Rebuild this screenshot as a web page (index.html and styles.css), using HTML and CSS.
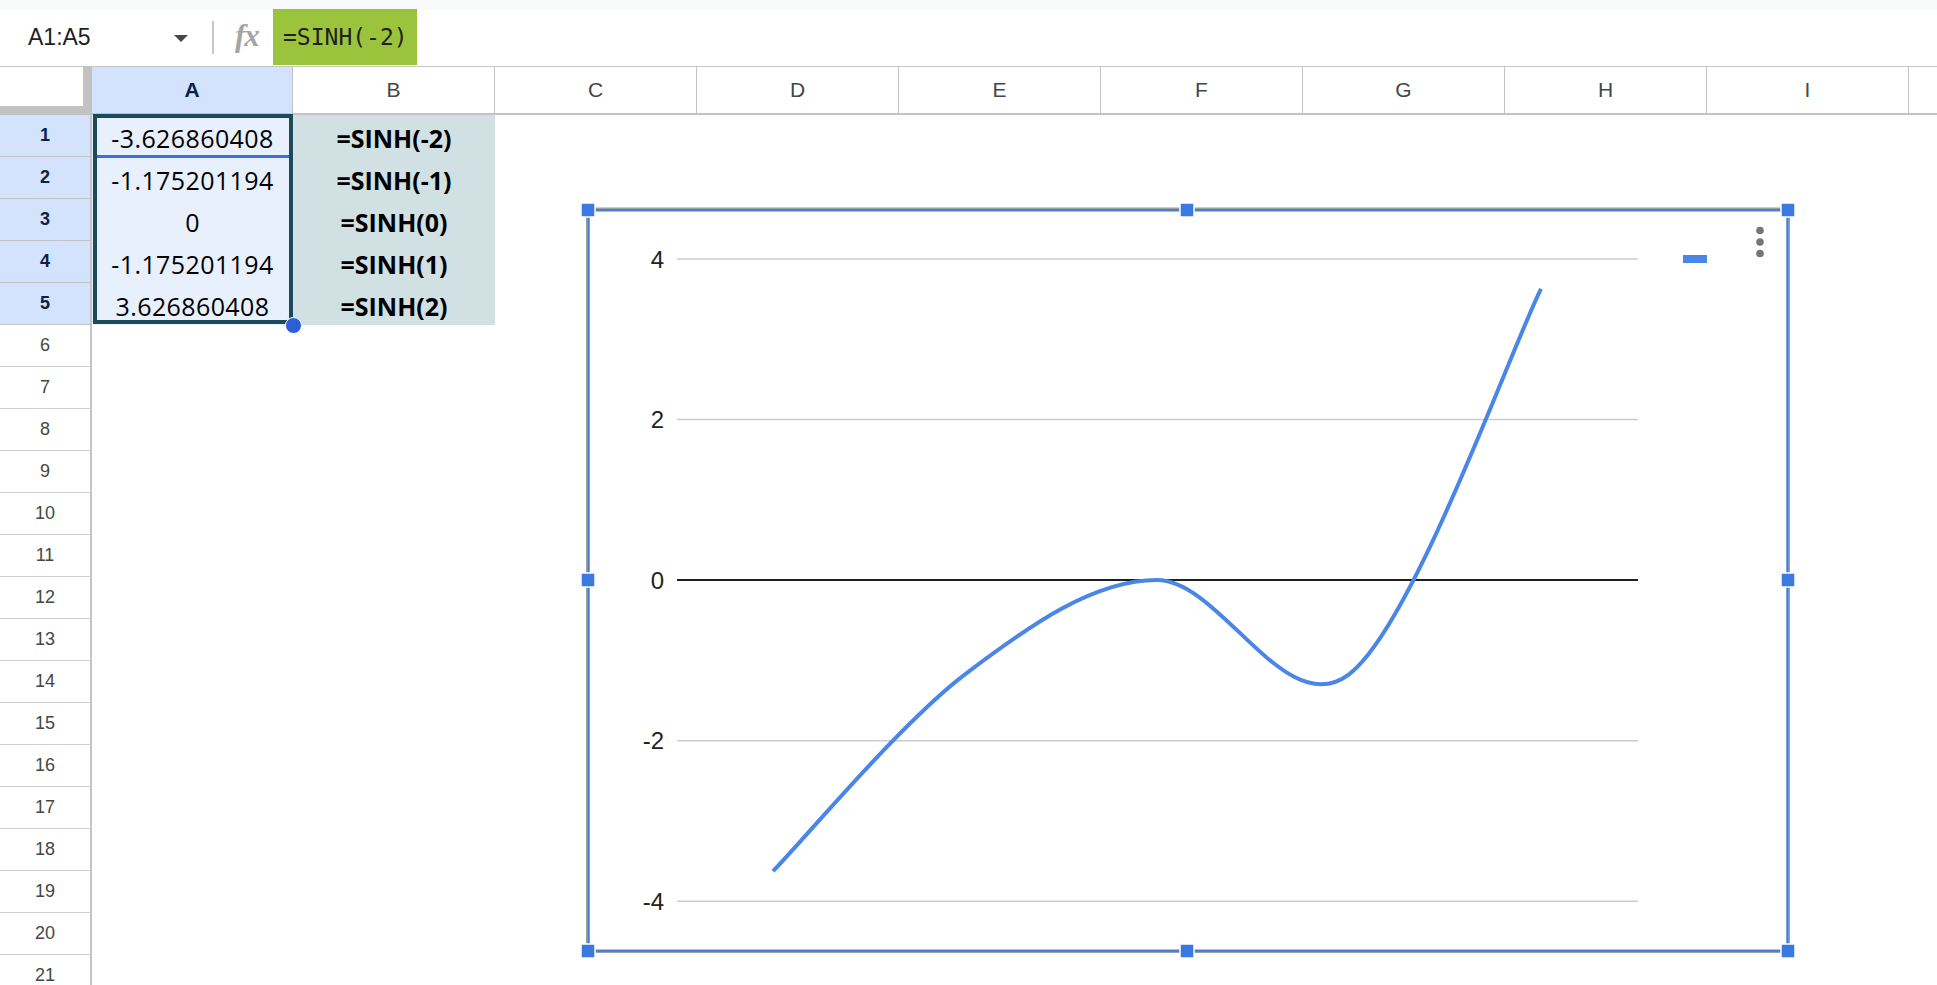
FILE: index.html
```html
<!DOCTYPE html>
<html>
<head>
<meta charset="utf-8">
<link rel="stylesheet" href="styles.css">
</head>
<body>
<div class="topstrip"></div>
<div class="fbar">
  <div class="namebox"><span class="nametext">A1:A5</span><span class="arrow"></span></div>
  <div class="sep"></div>
  <div class="fx">fx</div>
  <div class="formula">=SINH(-2)</div>
</div>
<div class="sheet">
  <div class="hrow">
    <div class="corner"></div>
    <div class="ch a">A</div>
    <div class="ch">B</div>
    <div class="ch">C</div>
    <div class="ch">D</div>
    <div class="ch">E</div>
    <div class="ch">F</div>
    <div class="ch">G</div>
    <div class="ch">H</div>
    <div class="ch">I</div>
    <div class="ch last"></div>
  </div>
  <div class="row"><div class="rh sel">1</div><div class="cell ca sel">-3.626860408</div><div class="cell cb fill">=SINH(-2)</div></div>
  <div class="row"><div class="rh sel">2</div><div class="cell ca sel">-1.175201194</div><div class="cell cb fill">=SINH(-1)</div></div>
  <div class="row"><div class="rh sel">3</div><div class="cell ca sel">0</div><div class="cell cb fill">=SINH(0)</div></div>
  <div class="row"><div class="rh sel">4</div><div class="cell ca sel">-1.175201194</div><div class="cell cb fill">=SINH(1)</div></div>
  <div class="row"><div class="rh sel">5</div><div class="cell ca sel">3.626860408</div><div class="cell cb fill">=SINH(2)</div></div>
  <div class="row"><div class="rh">6</div></div>
  <div class="row"><div class="rh">7</div></div>
  <div class="row"><div class="rh">8</div></div>
  <div class="row"><div class="rh">9</div></div>
  <div class="row"><div class="rh">10</div></div>
  <div class="row"><div class="rh">11</div></div>
  <div class="row"><div class="rh">12</div></div>
  <div class="row"><div class="rh">13</div></div>
  <div class="row"><div class="rh">14</div></div>
  <div class="row"><div class="rh">15</div></div>
  <div class="row"><div class="rh">16</div></div>
  <div class="row"><div class="rh">17</div></div>
  <div class="row"><div class="rh">18</div></div>
  <div class="row"><div class="rh">19</div></div>
  <div class="row"><div class="rh">20</div></div>
  <div class="row"><div class="rh">21</div></div>
</div>

<div class="selbox"><div class="activeline"></div></div>
<div class="fillhandle"></div>

<div class="chart">
  <svg class="chartsvg" width="1224" height="765" viewBox="576 198 1224 765">
    <rect x="586" y="208" width="1204" height="745" fill="#ffffff"/>
    <g class="grid">
      <line x1="677" y1="259" x2="1638" y2="259"/>
      <line x1="677" y1="419.6" x2="1638" y2="419.6"/>
      <line x1="677" y1="740.7" x2="1638" y2="740.7"/>
      <line x1="677" y1="901.3" x2="1638" y2="901.3"/>
    </g>
    <line class="zero" x1="677" y1="580" x2="1638" y2="580"/>
    <g class="labels">
      <text x="664" y="267.5">4</text>
      <text x="664" y="428">2</text>
      <text x="664" y="588.5">0</text>
      <text x="664" y="749">-2</text>
      <text x="664" y="910">-4</text>
    </g>
    <path class="series" d="M773 871.2 C805 838.4 901 722.8 965 674.3 C1029 625.8 1093 580 1157 580 C1221 580 1285 722.8 1349 674.3 C1413 625.8 1509 353.05 1541 288.8"/>
    <rect x="1683" y="255" width="24" height="8" fill="#4a85e8"/>
    <g fill="#757575">
      <circle cx="1760" cy="230.5" r="3.8"/>
      <circle cx="1760" cy="242" r="3.8"/>
      <circle cx="1760" cy="253.5" r="3.8"/>
    </g>
    <rect class="frame-gray" x="586.75" y="208.25" width="1202.5" height="744" />
    <rect class="frame-blue" x="588.5" y="210.25" width="1199" height="740.5" />
    <g class="handles">
      <rect x="581" y="203" width="14" height="14"/>
      <rect x="1180" y="203" width="14" height="14"/>
      <rect x="1781" y="203" width="14" height="14"/>
      <rect x="581" y="573" width="14" height="14"/>
      <rect x="1781" y="573" width="14" height="14"/>
      <rect x="581" y="944" width="14" height="14"/>
      <rect x="1180" y="944" width="14" height="14"/>
      <rect x="1781" y="944" width="14" height="14"/>
    </g>
  </svg>
</div>
</body>
</html>
```

FILE: styles.css
```css
* { box-sizing: border-box; }

body {
  margin: 0;
  width: 1937px;
  height: 985px;
  overflow: hidden;
  background: #ffffff;
  font-family: "Liberation Sans", Arial, sans-serif;
  position: relative;
}

.topstrip {
  height: 9px;
  background: #f8f9fa;
}

.fbar {
  height: 57px;
  display: flex;
  align-items: center;
  background: #ffffff;
}

.namebox {
  width: 212px;
  height: 100%;
  display: flex;
  align-items: center;
  justify-content: space-between;
  padding: 0 24px 0 28px;
}

.nametext {
  font-size: 23px;
  color: #202124;
}

.arrow {
  width: 0;
  height: 0;
  border-left: 7px solid transparent;
  border-right: 7px solid transparent;
  border-top: 7px solid #444746;
  margin-top: 2px;
}

.sep {
  width: 2px;
  height: 33px;
  background: #c7c7c7;
}

.fx {
  margin-left: 21px;
  width: 31px;
  margin-right: 7px;
  font-family: "Liberation Serif", serif;
  font-style: italic;
  font-weight: bold;
  font-size: 31px;
  color: #a4a4a4;
  letter-spacing: -1px;
  line-height: 1;
  margin-top: -4px;
}

.formula {
  align-self: flex-start;
  height: 56px;
  width: 144px;
  background: #9bc43c;
  padding-left: 10px;
  display: flex;
  align-items: center;
  font-family: "DejaVu Sans Mono", "Liberation Mono", monospace;
  font-size: 23px;
  color: #1f1f1f;
}

.sheet {
  border-top: 1px solid #c4c7c5;
}

.hrow {
  display: flex;
  height: 48px;
}

.corner {
  width: 92px;
  height: 48px;
  flex: none;
  background: #ffffff;
  border-right: 9px solid #c2c2c2;
  border-bottom: 9px solid #c2c2c2;
}

.ch {
  width: 202px;
  height: 48px;
  flex: none;
  border-right: 1px solid #c4c4c4;
  border-bottom: 2px solid #c4c4c4;
  display: flex;
  align-items: center;
  justify-content: center;
  font-size: 21px;
  color: #444746;
}

.ch.a {
  width: 201px;
  background: #d3e3fd;
  color: #0b2145;
  font-weight: bold;
}

.ch.last {
  flex: 1;
  border-right: 0;
}

.row {
  display: flex;
  height: 42px;
}

.rh {
  width: 92px;
  height: 42px;
  flex: none;
  border-right: 2px solid #c4c4c4;
  border-bottom: 1px solid #d0d0d0;
  display: flex;
  align-items: center;
  justify-content: center;
  font-size: 18px;
  color: #444746;
}

.rh.sel {
  background: #d3e3fd;
  color: #0b2145;
  font-weight: bold;
  border-bottom-color: #c4c4c4;
}

.cell {
  height: 42px;
  flex: none;
  text-align: center;
  font-family: "Open Sans", sans-serif;
  font-size: 25px;
  letter-spacing: 0.4px;
  line-height: 40px;
  padding-top: 3px;
  color: #000000;
  white-space: nowrap;
}

.ca { width: 201px; }
.ca.sel { background: #e8f0fe; }

.cb { width: 202px; }
.cb.fill {
  background: #d0e0e3;
  font-weight: bold;
  letter-spacing: 0;
}

.selbox {
  position: absolute;
  left: 93px;
  top: 114px;
  width: 200px;
  height: 210px;
  border: 4px solid #1b4b5a;
}

.activeline {
  position: absolute;
  left: 0;
  right: 0;
  top: 37px;
  height: 3px;
  background: #3a70d8;
}

.fillhandle {
  position: absolute;
  left: 285px;
  top: 317px;
  width: 17px;
  height: 17px;
  border-radius: 50%;
  background: #2c5ed8;
  border: 1px solid #ffffff;
}

.chart {
  position: absolute;
  left: 576px;
  top: 198px;
  width: 1224px;
  height: 765px;
}

.chartsvg {
  display: block;
}

.grid line {
  stroke: #cccccc;
  stroke-width: 1.5;
}

.zero {
  stroke: #1f1f1f;
  stroke-width: 1.8;
}

.labels text {
  font-family: "Liberation Sans", Arial, sans-serif;
  font-size: 24px;
  fill: #222222;
  text-anchor: end;
}

.series {
  fill: none;
  stroke: #4a85e8;
  stroke-width: 4;
  stroke-linecap: butt;
}

.frame-gray {
  fill: none;
  stroke: #9e9e9e;
  stroke-width: 1.5;
}

.frame-blue {
  fill: none;
  stroke: #4a7fd8;
  stroke-width: 2.5;
}

.handles rect {
  fill: #3a78e2;
  stroke: #ffffff;
  stroke-width: 1.5;
}
```
